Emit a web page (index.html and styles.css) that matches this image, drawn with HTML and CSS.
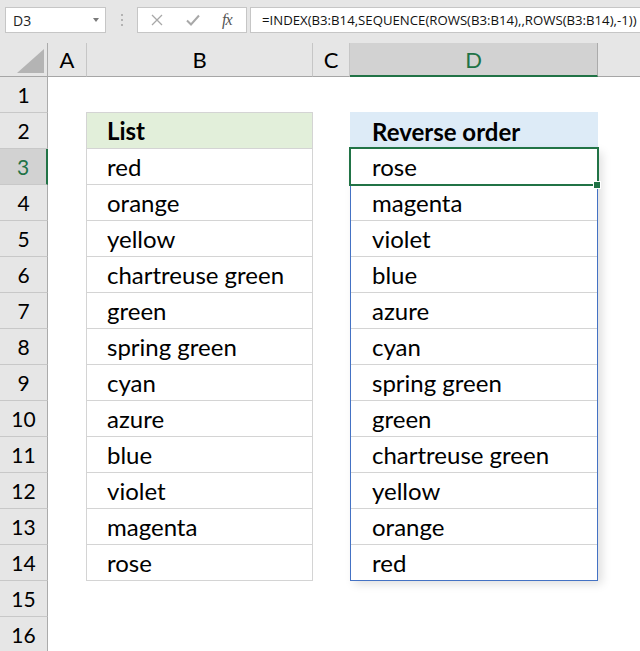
FILE: index.html
```html
<!DOCTYPE html>
<html>
<head>
<meta charset="utf-8">
<link rel="stylesheet" href="styles.css">
</head>
<body>
<div class="toolbar">
  <div class="namebox"><span class="nb-text">D3</span><span class="nb-arrow"></span></div>
  <div class="dots"><i></i><i></i><i></i></div>
  <div class="fxbox">
    <svg class="ico-x" width="12" height="12" viewBox="0 0 12 12"><path d="M1 1L11 11M11 1L1 11" stroke="#a8a8a8" stroke-width="1.3" fill="none"/></svg>
    <svg class="ico-ok" width="14" height="12" viewBox="0 0 14 12"><path d="M1 6.5L5 10.5L13 1.5" stroke="#a8a8a8" stroke-width="2" fill="none"/></svg>
    <span class="fx">fx</span>
  </div>
  <div class="formula">=INDEX(B3:B14,SEQUENCE(ROWS(B3:B14),,ROWS(B3:B14),-1))</div>
</div>
<div class="sheet">
  <div class="ch corner"><svg width="27" height="24" viewBox="0 0 27 24"><path d="M0 24L27 24L27 0Z" fill="#b4b4b4"/></svg></div>
  <div class="ch">A</div>
  <div class="ch">B</div>
  <div class="ch">C</div>
  <div class="ch ch-sel">D</div>
  <div class="ch ch-last"></div>

  <div class="rowheads">
    <div class="rh">1</div>
    <div class="rh">2</div>
    <div class="rh rh-sel">3</div>
    <div class="rh">4</div>
    <div class="rh">5</div>
    <div class="rh">6</div>
    <div class="rh">7</div>
    <div class="rh">8</div>
    <div class="rh">9</div>
    <div class="rh">10</div>
    <div class="rh">11</div>
    <div class="rh">12</div>
    <div class="rh">13</div>
    <div class="rh">14</div>
    <div class="rh">15</div>
    <div class="rh">16</div>
  </div>

  <div class="tbl-b">
    <div class="cell head-b">List</div>
    <div class="cell">red</div>
    <div class="cell">orange</div>
    <div class="cell">yellow</div>
    <div class="cell">chartreuse green</div>
    <div class="cell">green</div>
    <div class="cell">spring green</div>
    <div class="cell">cyan</div>
    <div class="cell">azure</div>
    <div class="cell">blue</div>
    <div class="cell">violet</div>
    <div class="cell">magenta</div>
    <div class="cell">rose</div>
  </div>

  <div class="head-d">Reverse order</div>

  <div class="spill">
    <div class="cell dcell">rose</div>
    <div class="cell dcell">magenta</div>
    <div class="cell dcell">violet</div>
    <div class="cell dcell">blue</div>
    <div class="cell dcell">azure</div>
    <div class="cell dcell">cyan</div>
    <div class="cell dcell">spring green</div>
    <div class="cell dcell">green</div>
    <div class="cell dcell">chartreuse green</div>
    <div class="cell dcell">yellow</div>
    <div class="cell dcell">orange</div>
    <div class="cell dcell dlast">red</div>
    <div class="selection"><span class="handle"></span></div>
  </div>
</div>
</body>
</html>
```

FILE: styles.css
```css
html, body {
  margin: 0;
  padding: 0;
}
body {
  width: 640px;
  height: 651px;
  overflow: hidden;
  background: #ffffff;
  font-family: Lato, "Liberation Sans", sans-serif;
  color: #000;
}

/* ---------- toolbar ---------- */
.toolbar {
  height: 43px;
  box-sizing: border-box;
  background: #e6e6e6;
  display: flex;
  align-items: flex-start;
  padding: 7px 0 0 5px;
  overflow: hidden;
}
.namebox {
  width: 101px;
  height: 26px;
  flex: none;
  box-sizing: border-box;
  background: #fff;
  border: 1px solid #c6c6c6;
  display: flex;
  align-items: center;
  justify-content: space-between;
  padding: 0 6px 0 7px;
  font-family: "Open Sans", "Noto Sans", sans-serif;
  font-size: 14px;
  color: #222;
}
.nb-arrow {
  width: 0;
  height: 0;
  border-left: 3.5px solid transparent;
  border-right: 3.5px solid transparent;
  border-top: 4px solid #7a7a7a;
}
.dots {
  flex: none;
  margin-left: 15px;
  width: 2px;
  padding-top: 7px;
  display: flex;
  flex-direction: column;
  gap: 3px;
}
.dots i {
  display: block;
  width: 2px;
  height: 2px;
  background: #b3b3b3;
}
.fxbox {
  flex: none;
  margin-left: 14px;
  width: 110px;
  height: 26px;
  box-sizing: border-box;
  background: #fff;
  border: 1px solid #c6c6c6;
  display: flex;
  align-items: center;
  padding-left: 13px;
}
.ico-ok {
  margin-left: 23px;
}
.fx {
  margin-left: 22px;
  font-family: "Liberation Serif", "DejaVu Serif", serif;
  font-style: italic;
  font-size: 16px;
  color: #555;
  letter-spacing: -1px;
}
.formula {
  flex: 1;
  margin-left: 3px;
  height: 26px;
  box-sizing: border-box;
  background: #fff;
  border: 1px solid #c6c6c6;
  border-right: none;
  padding-left: 11px;
  font-family: "Open Sans", "Noto Sans", sans-serif;
  font-size: 13.2px;
  line-height: 24px;
  color: #111;
  white-space: nowrap;
  overflow: hidden;
}

/* ---------- sheet ---------- */
.sheet {
  display: grid;
  grid-template-columns: 48px 39px 226px 37px 248px 1fr;
  grid-template-rows: 34px repeat(16, 36px);
}
.ch {
  background: #e6e6e6;
  border-right: 1px solid #c6c6c6;
  border-bottom: 1px solid #a6a6a6;
  display: flex;
  align-items: center;
  justify-content: center;
  font-size: 22px;
  line-height: 33px;
  box-sizing: border-box;
}
.corner {
  border-right-color: #ababab;
  justify-content: flex-end;
  align-items: flex-end;
  padding: 0 3px 3px 0;
}
.corner svg {
  display: block;
}
.ch-sel {
  background: #d2d2d2;
  color: #217346;
  border-right-color: #ababab;
  border-bottom: 2px solid #217346;
}
.ch-last {
  border-right: none;
}

.rowheads {
  grid-column: 1;
  grid-row: 2 / span 16;
  display: flex;
  flex-direction: column;
}
.rh {
  height: 36px;
  flex: none;
  box-sizing: border-box;
  background: #e6e6e6;
  border-right: 1px solid #ababab;
  border-bottom: 1px solid #c8c8c8;
  display: flex;
  align-items: center;
  justify-content: center;
  font-size: 21px;
}
.rh-sel {
  background: #d2d2d2;
  color: #217346;
  border-right: 2px solid #217346;
}

.tbl-b {
  grid-column: 3;
  grid-row: 3 / span 13;
  margin: -1px 0 0 -1px;
  border: 1px solid #d4d4d4;
  border-bottom: none;
  display: flex;
  flex-direction: column;
}
.cell {
  height: 36px;
  flex: none;
  box-sizing: border-box;
  border-bottom: 1px solid #d4d4d4;
  display: flex;
  align-items: center;
  padding-left: 20px;
  font-size: 24px;
  white-space: nowrap;
}
.head-b {
  background: #e2efda;
  font-weight: bold;
}
.head-d {
  grid-column: 5;
  grid-row: 3;
  margin-top: -1px;
  background: #ddebf7;
  display: flex;
  align-items: center;
  padding-left: 22px;
  padding-top: 1px;
  font-size: 24px;
  font-weight: bold;
}
.spill {
  grid-column: 5;
  grid-row: 4 / span 12;
  position: relative;
  border-left: 1px solid #4472c4;
  border-right: 1px solid #4472c4;
  display: flex;
  flex-direction: column;
  box-shadow: 4px 3px 9px rgba(0, 0, 0, 0.13);
  background: #fff;
}
.dcell {
  padding-left: 21px;
}
.dlast {
  border-bottom-color: #4472c4;
}
.selection {
  position: absolute;
  left: -2px;
  top: -2px;
  width: 250px;
  height: 39px;
  box-sizing: border-box;
  border: 2px solid #217346;
}
.handle {
  position: absolute;
  right: -3px;
  bottom: -4px;
  width: 6px;
  height: 6px;
  background: #217346;
  box-shadow: 0 0 0 1px #fff;
}
```
